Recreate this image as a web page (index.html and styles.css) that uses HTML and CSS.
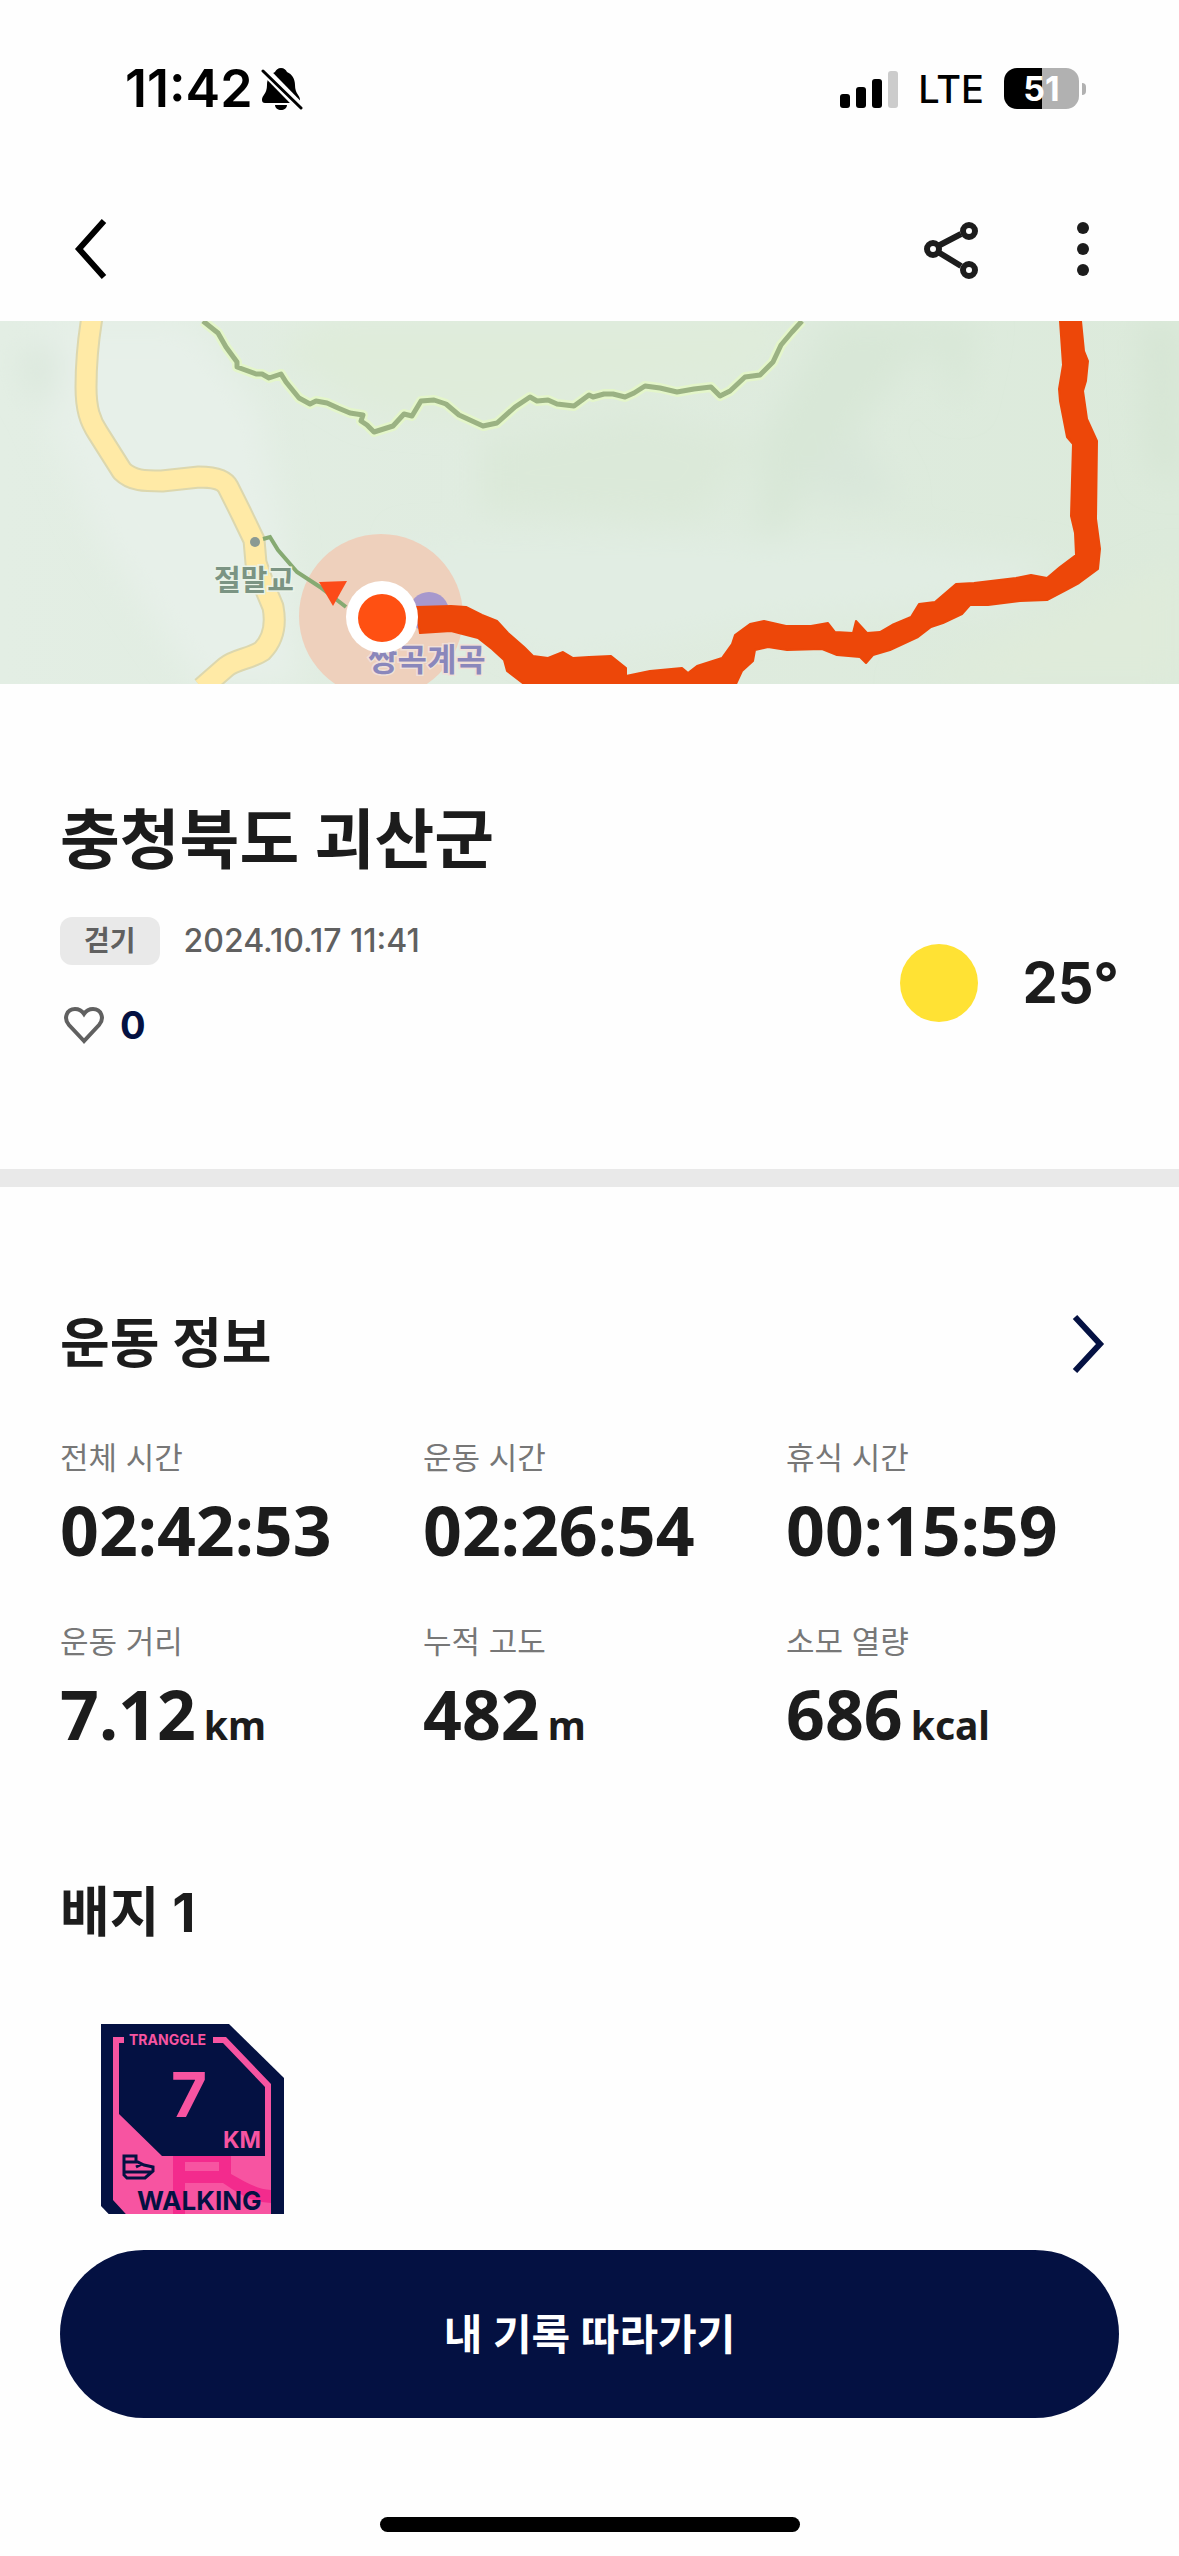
FILE: index.html
```html
<!DOCTYPE html>
<html lang="ko">
<head>
<meta charset="utf-8">
<meta name="viewport" content="width=device-width, initial-scale=1">
<title>충청북도 괴산군</title>
<link rel="stylesheet" href="styles.css">
</head>
<body>
<div class="app">
  <div class="status">
    <div class="status-side">
      <span class="clock">11:42</span>
      <svg class="bell" width="42" height="44" viewBox="0 0 42 44" aria-hidden="true">
        <path d="M20 1c3 0 5 2 6 4 5 2 8 7 8 13 0 9 5 10 5 15 0 2-1 3-3 3H4c-2 0-3-1-3-3 0-5 5-6 5-15C6 12 9 7 14 5c1-2 3-4 6-4z"/>
        <path d="M14 38h12c0 3-3 5-6 5s-6-2-6-5z"/>
        <path d="M1 1l42 43" stroke="#fefefe" stroke-width="9"/>
        <path d="M2 4l38 37" stroke="#000" stroke-width="3" stroke-linecap="round"/>
      </svg>
    </div>
    <div class="status-side">
      <svg width="58" height="38" viewBox="0 0 58 38" aria-hidden="true">
        <rect x="0" y="24" width="10" height="14" rx="3"/>
        <rect x="16" y="17" width="10" height="21" rx="3"/>
        <rect x="32" y="9" width="10" height="29" rx="3"/>
        <rect x="48" y="1" width="10" height="37" rx="3" fill="#ccc"/>
      </svg>
      <span class="network">LTE</span>
      <span class="battery"><span class="battery-level">51</span></span>
    </div>
  </div>

  <header class="nav">
    <button class="icon-button" type="button" aria-label="뒤로">
      <svg width="60" height="60" viewBox="0 0 60 60"><path d="M44 2L19 30l25 28" fill="none" stroke="#000" stroke-width="6"/></svg>
    </button>
    <div class="nav-actions">
      <button class="icon-button" type="button" aria-label="공유">
        <svg width="60" height="60" viewBox="0 0 60 60" fill="none" stroke="#1c1c1c" stroke-width="6"><path d="M17 27l23-12M17 33l23 14"/><circle cx="12" cy="30" r="6"/><circle cx="48" cy="12" r="6"/><circle cx="48" cy="51" r="6"/></svg>
      </button>
      <button class="icon-button" type="button" aria-label="더보기">
        <svg width="60" height="60" viewBox="0 0 60 60" fill="#1c1c1c"><circle cx="30" cy="9" r="6"/><circle cx="30" cy="30" r="6"/><circle cx="30" cy="51" r="6"/></svg>
      </button>
    </div>
  </header>

  <main class="content">
    <svg class="map" viewBox="0 0 1179 363" preserveAspectRatio="xMidYMid slice" role="img" aria-label="운동 경로 지도">
      <defs>
        <linearGradient id="ground" x1="0" x2="1" y1="0" y2="0">
          <stop offset="0" stop-color="#e3eee4"/>
          <stop offset=".4" stop-color="#e0ece0"/>
          <stop offset="1" stop-color="#dceadb"/>
        </linearGradient>
        <filter id="soft"><feGaussianBlur stdDeviation="16"/></filter>
      </defs>
      <rect width="1179" height="363" fill="url(#ground)"/>
      <g filter="url(#soft)">
        <path d="M110 0H190L260 90 280 200 300 363H200L100 220 30 60V0z" fill="#e7f0e9"/>
        <path d="M330 0H800L740 60 590 75 480 100 370 90 270 30z" fill="#dfecda"/>
        <path d="M830 0H980L960 90 930 20 860 100 800 180 760 240 760 120z" fill="#d8e7d7"/>
        <path d="M480 120L640 90 760 120 700 200 480 190z" fill="#dbe9d9"/>
        <path d="M860 110L900 180 840 185 790 160z" fill="#d9e7da"/>
        <path d="M1140 0H1179V160L1150 150z" fill="#d6e5d4"/>
        <path d="M400 220H880L1060 240 1000 280 760 300 560 340 450 290z" fill="#e1ede3"/>
        <path d="M1000 320L1179 240V363H900z" fill="#dfebda"/>
        <path d="M20 30L60 20 50 90 30 70z" fill="#dae7db"/>
      </g>
      <g fill="none" stroke-linejoin="round">
        <path d="M92 -4C88 20 86 39 86 66 86 88 90 100 98 112L122 150C132 160 145 160 162 160L199 156C212 156 224 158 228 166L241 192 254 219 256 242 263 262 273 286C276 302 274 318 262 330 250 338 236 338 226 346L202 367" stroke="#dcd7ae" stroke-width="23"/>
        <path d="M92 -4C88 20 86 39 86 66 86 88 90 100 98 112L122 150C132 160 145 160 162 160L199 156C212 156 224 158 228 166L241 192 254 219 256 242 263 262 273 286C276 302 274 318 262 330 250 338 236 338 226 346L202 367" stroke="#ffeaa6" stroke-width="19"/>
        <path d="M203 0L218 12 226 26 237 41 237 46 256 53 262 53 269 57 281 53 286 61 299 77 310 83 316 80 327 82 338 87 350 92 363 94 361 100 367 104 374 111 393 105 404 93 412 95 421 80 434 79 446 83 459 94 483 105 497 102 515 86 530 76 537 80 548 79 557 83 574 85 589 74 593 76 604 73 613 73 625 76 634 72 645 65 660 67 677 71 694 68 711 66 720 75 730 70 745 56 760 54 773 41 781 24 792 11 802 0" stroke="#e4f6ca" stroke-width="10"/>
        <path d="M203 0L218 12 226 26 237 41 237 46 256 53 262 53 269 57 281 53 286 61 299 77 310 83 316 80 327 82 338 87 350 92 363 94 361 100 367 104 374 111 393 105 404 93 412 95 421 80 434 79 446 83 459 94 483 105 497 102 515 86 530 76 537 80 548 79 557 83 574 85 589 74 593 76 604 73 613 73 625 76 634 72 645 65 660 67 677 71 694 68 711 66 720 75 730 70 745 56 760 54 773 41 781 24 792 11 802 0" stroke="#9bb283" stroke-width="5"/>
      </g>
      <circle cx="381" cy="295" r="82" fill="#eed0bc"/>
      <path d="M263 218L270 216 278 229 297 251 320 266 346 286" fill="none" stroke="#86aa72" stroke-width="4"/>
      <circle cx="255" cy="221" r="5" fill="#8b9a93"/>
      <path d="M319 261L347 260 333 285z" fill="#fc4b19"/>
      <circle cx="429" cy="291" r="20" fill="#a798cd"/>
      <path d="M422 286h14v8h-14z" fill="#e6d8ea"/>
      <text class="place place-bridge" x="214" y="270">절말교</text>
      <text class="place place-valley" x="368" y="350">쌍곡계곡</text>
      <path d="M416 286L451 285 466 286 482 294 497 300 508 312 524 326 533 335 548 337 563 331 573 337 589 336 611 335 626 347 626 355 650 350 682 347 688 352 697 345 722 337 732 323 735 314 750 303 764 300 786 305 811 305 828 302 835 311 853 312 856 300 867 312 880 311 892 304 911 296 919 283 935 281 942 275 956 263 974 262 1016 257 1031 254 1047 257 1060 246 1076 234 1075 212 1071 195 1073 123 1067 116 1060 80 1059 68 1063 44 1060 0H1081L1084 30 1088 40 1086 60 1083 70 1087 98 1097 120 1096 198 1100 228 1098 248 1079 262 1066 269 1047 279 1020 280 988 284 970 284 962 293 943 302 931 306 918 316 890 329 873 334 866 342 860 336 837 334 822 328 787 329 768 326 755 329 753 340 742 350 736 363H524L507 350 504 339 492 328 478 317 451 310 420 312z" fill="#ed4709" stroke="#ed4709" stroke-width="2" stroke-linejoin="round"/>
      <circle cx="382" cy="296" r="36" fill="#fff"/>
      <circle cx="382" cy="297" r="24" fill="#ff5012"/>
    </svg>

    <section class="summary">
      <h1 class="place-title">충청북도 괴산군</h1>
      <div class="summary-row">
        <div class="meta">
          <div class="meta-line">
            <span class="chip">걷기</span>
            <time class="date" datetime="2024-10-17T11:41">2024.10.17 11:41</time>
          </div>
          <button class="like" type="button" aria-label="좋아요">
            <svg width="48" height="48" viewBox="0 0 48 48" fill="none" stroke="#606060" stroke-width="4"><path d="M24 40L9 24C3 17 7 8 15 8c4 0 7 2 9 5 2-3 5-5 9-5 8 0 12 9 6 16z"/></svg>
            <span class="like-count">0</span>
          </button>
        </div>
        <div class="weather">
          <span class="sun"></span>
          <span class="temperature">25°</span>
        </div>
      </div>
    </section>

    <section class="workout">
      <div class="section-head">
        <h2 class="section-title">운동 정보</h2>
        <button class="icon-button" type="button" aria-label="운동 정보 자세히">
          <svg width="60" height="60" viewBox="0 0 60 60"><path d="M16 3L41 30 16 57" fill="none" stroke="#041142" stroke-width="6"/></svg>
        </button>
      </div>
      <dl class="stats">
        <div class="stat"><dt>전체 시간</dt><dd>02:42:53</dd></div>
        <div class="stat"><dt>운동 시간</dt><dd>02:26:54</dd></div>
        <div class="stat"><dt>휴식 시간</dt><dd>00:15:59</dd></div>
        <div class="stat"><dt>운동 거리</dt><dd>7.12<span class="unit">km</span></dd></div>
        <div class="stat"><dt>누적 고도</dt><dd>482<span class="unit">m</span></dd></div>
        <div class="stat"><dt>소모 열량</dt><dd>686<span class="unit">kcal</span></dd></div>
      </dl>
    </section>

    <section class="badges">
      <h2 class="section-title">배지 1</h2>
      <div class="badge-list">
        <svg width="183" height="224" viewBox="0 0 183 224" role="img" aria-label="TRANGGLE 7KM WALKING">
          <path d="M0 0H128L183 54V224H40L0 182z" fill="#041142"/>
          <path d="M12 13H23V19H18V90L61 132H164V63L122 19H112V13H125L170 60V212H45L12 176z" fill="#f754a1"/>
          <path d="M72 132H130V150C145 158 155 165 170 166V179C152 178 142 172 131 165L122 159H84V212H72zM84 138H118V147H84z" fill="#f32b8d" fill-rule="evenodd"/>
          <g fill="none" stroke="#041142" stroke-width="3"><path d="M23 132H35V137L43 141 52 143V147L44 154H26L23 151zM24 138H36M24 148H52M35 143L41 140"/></g>
          <text class="badge-brand" x="28" y="21">TRANGGLE</text>
          <text class="badge-number" x="70" y="93">7</text>
          <text class="badge-unit" x="122" y="124">KM</text>
          <text class="badge-name" x="36" y="186">WALKING</text>
        </svg>
      </div>
    </section>
  </main>

  <footer class="bottom">
    <button class="follow" type="button">내 기록 따라가기</button>
    <div class="home-indicator"></div>
  </footer>
</div>
</body>
</html>
```
FILE: styles.css
```css
* {
  box-sizing: border-box;
}

body,
h1,
h2,
dl,
dd {
  margin: 0;
}

body {
  background: #fefefe;
  color: #1c1c1c;
  font-family: Inter, "Noto Sans CJK KR", sans-serif;
}

button {
  padding: 0;
  border: 0;
  background: none;
  color: inherit;
  font: inherit;
}

svg {
  display: block;
  flex: none;
}

.app {
  display: flex;
  flex-direction: column;
  height: 100vh;
}

/* Status bar */
.status {
  display: flex;
  flex: none;
  align-items: center;
  justify-content: space-between;
  height: 177px;
  padding: 0 93px 0 125px;
  color: #000;
}

.status-side {
  display: flex;
  align-items: center;
}

.clock {
  margin-right: 8px;
  font-size: 52px;
  font-weight: 600;
}

.network {
  margin: 0 20px;
  font-size: 38px;
  font-weight: 500;
}

.battery {
  position: relative;
  width: 75px;
  height: 41px;
  margin-right: 7px;
}

.battery-level {
  display: block;
  border-radius: 13px;
  background: linear-gradient(90deg, #000 51%, #b1b1b1 51%);
  color: #fff;
  font-size: 34px;
  font-weight: 700;
  line-height: 41px;
  text-align: center;
}

.battery::after {
  content: "";
  position: absolute;
  top: 15px;
  right: -7px;
  width: 4px;
  height: 12px;
  border-radius: 0 4px 4px 0;
  background: #b1b1b1;
}

/* Navigation */
.nav {
  display: flex;
  flex: none;
  align-items: center;
  justify-content: space-between;
  height: 144px;
  padding: 0 66px 0 60px;
}

.nav-actions {
  display: flex;
  gap: 72px;
}

.content {
  flex: 1;
  min-height: 0;
  overflow-y: auto;
  scrollbar-width: none;
}

/* Route map */
.map {
  width: 100%;
  height: 363px;
}

.place {
  font-family: "Noto Sans CJK KR", sans-serif;
  font-weight: 700;
  paint-order: stroke;
  stroke-width: 3px;
}

.place-bridge {
  fill: #7b9483;
  font-size: 29px;
  stroke: #eaf3e8;
}

.place-valley {
  fill: #8a87bb;
  font-size: 32px;
  stroke: #f0e0d8;
}

/* Summary */
.summary {
  padding: 108px 60px 120px;
  border-bottom: 18px solid #e9e9e9;
}

.place-title {
  margin-bottom: 29px;
  font-size: 65px;
  font-weight: 700;
  line-height: 96px;
}

.summary-row {
  display: flex;
  align-items: center;
  justify-content: space-between;
}

.meta {
  display: flex;
  flex-direction: column;
  gap: 36px;
}

.meta-line {
  display: flex;
  align-items: center;
  gap: 24px;
  color: #606060;
}

.chip {
  padding: 0 24px;
  border-radius: 12px;
  background: #e9e9e9;
  font-size: 28px;
  font-weight: 700;
  line-height: 48px;
}

.date {
  font-size: 32px;
  font-weight: 500;
  line-height: 48px;
}

.like {
  display: flex;
  gap: 12px;
  align-items: center;
  align-self: flex-start;
}

.like-count {
  color: #041142;
  font-size: 38px;
  font-weight: 700;
  line-height: 48px;
}

.weather {
  display: flex;
  align-items: center;
  gap: 45px;
}

.sun {
  width: 78px;
  height: 78px;
  border-radius: 50%;
  background: #ffe234;
}

.temperature {
  font-size: 56px;
  font-weight: 700;
}

/* Workout */
.workout {
  padding: 120px 60px 0;
}

.section-head {
  display: flex;
  align-items: center;
  justify-content: space-between;
  margin-bottom: 55px;
}

.section-title {
  font-size: 54px;
  font-weight: 700;
  line-height: 74px;
}

.stats {
  display: grid;
  grid-template-columns: repeat(3, 1fr);
  row-gap: 50px;
  column-gap: 30px;
}

.section-head + .stats {
  margin-top: -2px;
}

.stat {
  display: flex;
  flex-direction: column;
  gap: 12px;
  white-space: nowrap;
}

.stat dt {
  color: #777;
  font-size: 31px;
  line-height: 48px;
}

.stat dd {
  height: 74px;
  font-family: "Noto Sans", sans-serif;
  font-size: 68px;
  font-weight: 700;
  line-height: 72px;
}

.unit {
  margin-left: 8px;
  font-size: 39px;
  line-height: 39px;
}

/* Badges */
.badges {
  padding: 124px 60px 0;
}

.badge-list {
  display: flex;
  padding: 74px 41px;
}

.badge-brand,
.badge-number,
.badge-unit {
  fill: #f754a1;
  font-weight: 700;
}

.badge-brand {
  font-size: 14px;
}

.badge-number {
  font-size: 62px;
}

.badge-unit {
  font-size: 23px;
}

.badge-name {
  fill: #041142;
  font-size: 26px;
  font-weight: 700;
}

/* Bottom action */
.bottom {
  display: flex;
  flex: none;
  flex-direction: column;
  align-items: center;
  gap: 99px;
  padding: 36px 60px 24px;
}

.follow {
  width: 100%;
  height: 168px;
  padding-bottom: 6px;
  border-radius: 84px;
  background: #041142;
  color: #fff;
  font-size: 42px;
  font-weight: 600;
}

.home-indicator {
  width: 420px;
  height: 15px;
  border-radius: 8px;
  background: #000;
}
```
